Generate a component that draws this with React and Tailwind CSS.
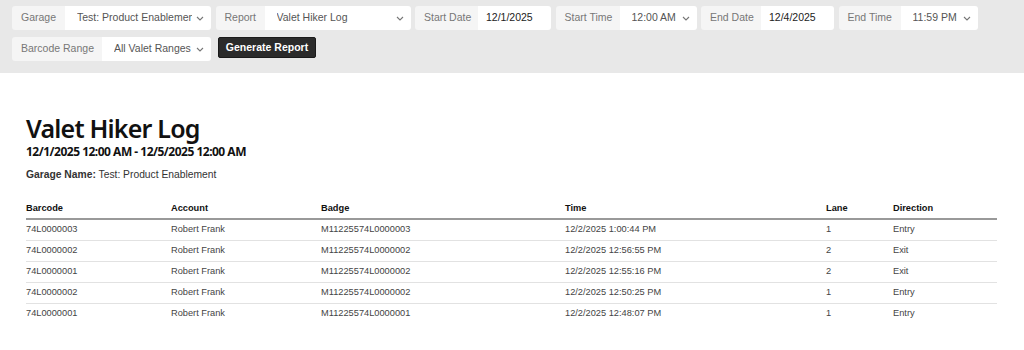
import React from "react";

const rows = [
  { barcode: "74L0000003", account: "Robert Frank", badge: "M11225574L0000003", time: "12/2/2025 1:00:44 PM", lane: "1", direction: "Entry" },
  { barcode: "74L0000002", account: "Robert Frank", badge: "M11225574L0000002", time: "12/2/2025 12:56:55 PM", lane: "2", direction: "Exit" },
  { barcode: "74L0000001", account: "Robert Frank", badge: "M11225574L0000002", time: "12/2/2025 12:55:16 PM", lane: "2", direction: "Exit" },
  { barcode: "74L0000002", account: "Robert Frank", badge: "M11225574L0000002", time: "12/2/2025 12:50:25 PM", lane: "1", direction: "Entry" },
  { barcode: "74L0000001", account: "Robert Frank", badge: "M11225574L0000001", time: "12/2/2025 12:48:07 PM", lane: "1", direction: "Entry" },
];

function Chevron() {
  return (
    <svg width="8" height="5" viewBox="0 0 8 5" fill="none" className="shrink-0">
      <path d="M1 1l3 3 3-3" stroke="#777" strokeWidth="1.1" />
    </svg>
  );
}

// label + select box
function SelectField({ label, value, labelW, boxW }) {
  return (
    <div className="flex h-6 rounded-[3px] overflow-hidden">
      <div className={`${labelW} bg-[#f5f5f5] text-[#777] flex items-center pl-[9px] whitespace-nowrap`}>{label}</div>
      <div className={`${boxW} bg-white text-[#555] flex items-center justify-between gap-1 pl-3 pr-[7px]`}>
        <span className="overflow-hidden whitespace-nowrap">{value}</span>
        <Chevron />
      </div>
    </div>
  );
}

function InputField({ label, value, labelW, boxW }) {
  return (
    <div className="flex h-6 rounded-[3px] overflow-hidden">
      <div className={`${labelW} bg-[#f5f5f5] text-[#777] flex items-center pl-[9px] whitespace-nowrap`}>{label}</div>
      <div className={`${boxW} bg-white text-[#222] flex items-center pl-2`}>{value}</div>
    </div>
  );
}

export default function App() {
  return (
    <div className="bg-white min-h-[350px] font-['Liberation_Sans',Arial,sans-serif]">
      {/* Filter bar */}
      <div className="bg-[#e8e8e8] h-[73px] pl-3 pt-[6px] text-[10.5px]">
        <div className="flex gap-[4.5px]">
          <SelectField label="Garage" value="Test: Product Enablement" labelW="w-[53px]" boxW="w-[146px]" />
          <SelectField label="Report" value="Valet Hiker Log" labelW="w-[49px]" boxW="w-[146px]" />
          <InputField label="Start Date" value="12/1/2025" labelW="w-[63px]" boxW="w-[73px]" />
          <SelectField label="Start Time" value="12:00 AM" labelW="w-[64px]" boxW="w-[77px]" />
          <InputField label="End Date" value="12/4/2025" labelW="w-[60px]" boxW="w-[73px]" />
          <SelectField label="End Time" value="11:59 PM" labelW="w-[62px]" boxW="w-[77px]" />
        </div>
        <div className="flex gap-[7px] mt-[7px]">
          <SelectField label="Barcode Range" value="All Valet Ranges" labelW="w-[90px]" boxW="w-[109px]" />
          <button className="h-[21px] w-[98px] bg-[#2b2b2b] text-white font-bold rounded-[2px] border border-[#1a1a1a]">
            Generate Report
          </button>
        </div>
      </div>

      {/* Report */}
      <div className="pl-[26px] pr-[27px] pt-[41px]">
        <h1 className="font-['Noto_Sans',sans-serif] font-semibold text-[25px] tracking-[-0.8px] leading-[28px] text-[#111]">Valet Hiker Log</h1>
        <div className="mt-[2px] font-['Noto_Sans',sans-serif] font-bold text-[12px] tracking-[-0.5px] leading-[16px] text-[#111]">
          12/1/2025 12:00 AM - 12/5/2025 12:00 AM
        </div>
        <p className="mt-[7px] text-[10.3px] text-[#333]">
          <span className="font-bold">Garage Name:</span> Test: Product Enablement
        </p>

        <table className="mt-[20px] w-full text-[9.25px] table-fixed border-collapse">
          <colgroup>
            <col className="w-[145px]" />
            <col className="w-[150px]" />
            <col className="w-[244px]" />
            <col className="w-[261px]" />
            <col className="w-[67px]" />
            <col />
          </colgroup>
          <thead>
            <tr className="border-b-2 border-[#999] text-left text-[#111]">
              <th className="font-bold h-[15px] pb-[2px] align-middle">Barcode</th>
              <th className="font-bold pb-[2px] align-middle">Account</th>
              <th className="font-bold pb-[2px] align-middle">Badge</th>
              <th className="font-bold pb-[2px] align-middle">Time</th>
              <th className="font-bold pb-[2px] align-middle">Lane</th>
              <th className="font-bold pb-[2px] align-middle">Direction</th>
            </tr>
          </thead>
          <tbody className="text-[#444]">
            {rows.map((r, i) => (
              <tr key={i} className={i < rows.length - 1 ? "border-b border-[#e2e2e2]" : ""}>
                <td className="h-[21px] align-middle">{r.barcode}</td>
                <td>{r.account}</td>
                <td>{r.badge}</td>
                <td>{r.time}</td>
                <td>{r.lane}</td>
                <td>{r.direction}</td>
              </tr>
            ))}
          </tbody>
        </table>
      </div>
    </div>
  );
}
